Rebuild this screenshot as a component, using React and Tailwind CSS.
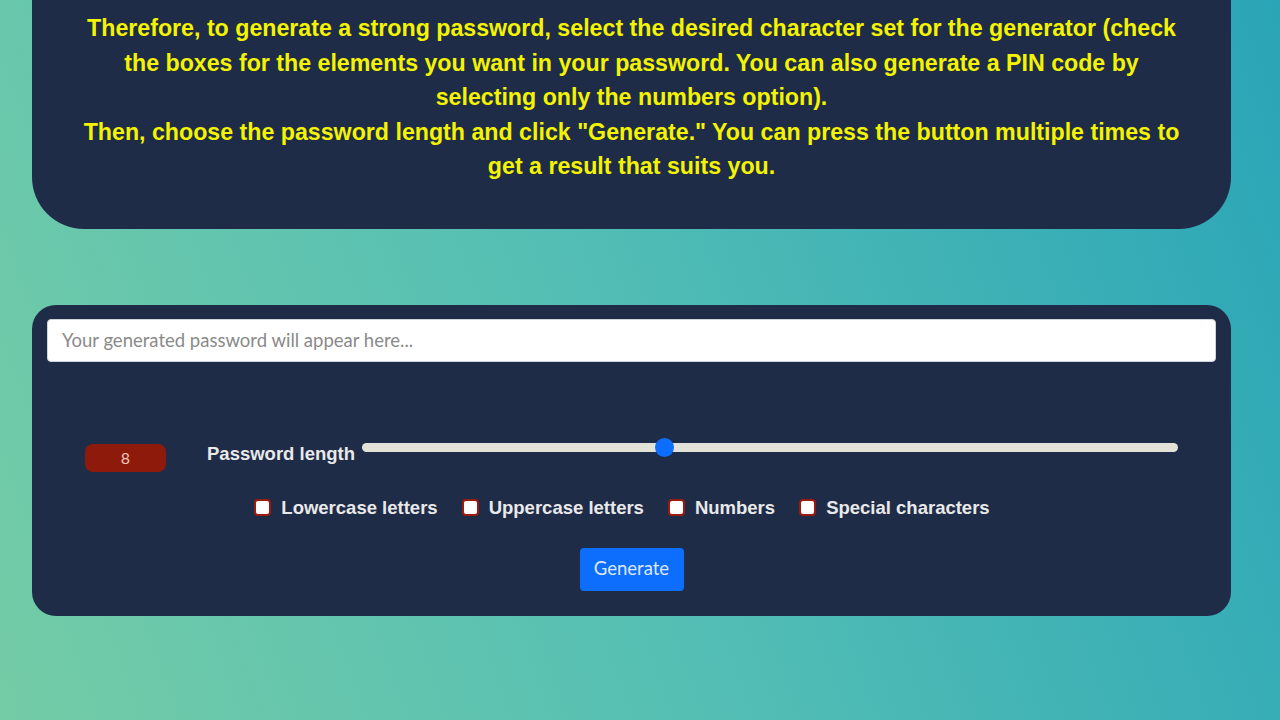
import { useState } from 'react';

export default function App() {
  const [length, setLength] = useState(8);
  const [opts, setOpts] = useState({ lower: false, upper: false, numbers: false, special: false });

  const toggle = (k) => setOpts({ ...opts, [k]: !opts[k] });

  const options = [
    ['lower', 'Lowercase letters'],
    ['upper', 'Uppercase letters'],
    ['numbers', 'Numbers'],
    ['special', 'Special characters'],
  ];

  return (
    <div className="min-h-[720px] w-full bg-[linear-gradient(70deg,#74cca6_0%,#55bfb4_45%,#2aa5b7_100%)] pl-[32px] pr-[49px] pb-[105px] font-['Liberation_Sans',Arial,sans-serif]">
      {/* Intro card */}
      <div className="bg-[#1f2c48] rounded-b-[52px] pt-[11px] pb-[45px]">
        <p className="mx-auto w-[1098px] text-center text-[#f4f400] font-bold text-[23.2px] leading-[34.5px]">
          Therefore, to generate a strong password, select the desired character set for the generator (check the boxes for the elements you want in your password. You can also generate a PIN code by selecting only the numbers option).
          <br />
          Then, choose the password length and click "Generate." You can press the button multiple times to get a result that suits you.
        </p>
      </div>

      {/* Generator card */}
      <div className="mt-[76px] bg-[#1f2c48] rounded-[24px] px-[15px] pt-[14px] pb-[25px]">
        <input
          type="text"
          readOnly
          placeholder="Your generated password will appear here..."
          className="w-full h-[43px] bg-white rounded-[4px] border border-[#ced4da] px-[14px] text-[18.5px] font-['Lato',sans-serif] text-[#333] placeholder:text-[#8a8a8a] outline-none"
        />

        <div className="flex items-start mt-[76px] px-[38px]">
          <div className="mt-[6px] w-[81px] h-[28px] rounded-[8px] bg-[#8e1a0c] text-[#f3c6b8] text-[16px] flex items-center justify-center font-['Lato',sans-serif]">
            {length}
          </div>
          <label className="ml-[41px] mt-[6px] text-[#e9e9e9] font-bold text-[18.5px] leading-[20px] whitespace-nowrap">Password length</label>
          <div className="relative flex-1 ml-[7px] h-[19px]">
            <div className="absolute left-0 right-0 top-[5px] h-[9px] rounded-full bg-[#e2e2d9]"></div>
            <input
              type="range"
              min="4"
              max="20"
              value={length}
              onChange={(e) => setLength(Number(e.target.value))}
              className="absolute inset-0 w-full opacity-0 cursor-pointer"
            />
            <div className="absolute top-0 left-[293px] w-[19px] h-[19px] rounded-full bg-[#0d6efd] pointer-events-none"></div>
          </div>
        </div>

        <div className="flex justify-center items-center gap-[24px] mt-[26px] pr-[19px]">
          {options.map(([k, label]) => (
            <label key={k} className="flex items-center gap-[10px] cursor-pointer">
              <span
                onClick={() => toggle(k)}
                className={`w-[17px] h-[17px] rounded-[4px] border-2 border-[#9a1b0e] ${opts[k] ? 'bg-[#0d6efd]' : 'bg-white'}`}
              ></span>
              <span className="text-[#e9e9e9] font-bold text-[18.5px] leading-[20px]">{label}</span>
            </label>
          ))}
        </div>

        <div className="flex justify-center mt-[30px]">
          <button className="w-[104px] h-[43px] rounded-[4px] bg-[#0d6efd] text-[#dde8f5] text-[18.5px] font-['Lato',sans-serif]">
            Generate
          </button>
        </div>
      </div>
    </div>
  );
}
